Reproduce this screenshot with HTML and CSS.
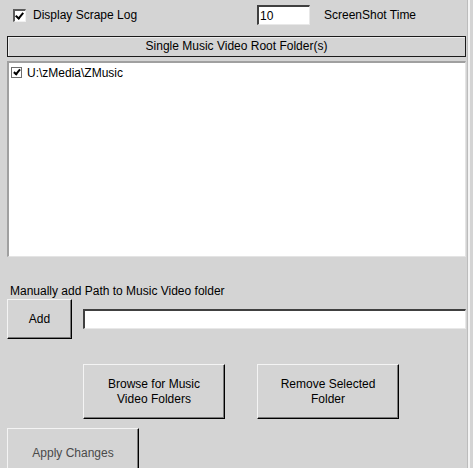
FILE: index.html
```html
<!DOCTYPE html>
<html lang="en">
<head>
    <meta charset="UTF-8">
    <title>Music Video Settings</title>
    <link rel="stylesheet" href="styles.css">
</head>
<body>
    <div class="window">
        <div class="top-row">
            <span class="check checked"></span>
            <span class="top-label">Display Scrape Log</span>
            <input class="field time-field" type="text" value="10">
            <span class="time-label">ScreenShot Time</span>
        </div>

        <div class="list-header">Single Music Video Root Folder(s)</div>
        <div class="folder-list">
            <div class="folder-item">
                <span class="check small checked"></span>
                <span>U:\zMedia\ZMusic</span>
            </div>
        </div>

        <div class="path-label">Manually add Path to Music Video folder</div>
        <div class="add-row">
            <button class="btn add-btn">Add</button>
            <input class="field path-field" type="text">
        </div>

        <div class="action-row">
            <button class="btn big-btn">Browse for Music<br>Video Folders</button>
            <button class="btn big-btn">Remove Selected<br>Folder</button>
        </div>

        <button class="btn apply-btn" disabled>Apply Changes</button>
    </div>
</body>
</html>
```

FILE: styles.css
```css
* {
    margin: 0;
    padding: 0;
    box-sizing: border-box;
}

body {
    font-family: 'Liberation Sans', Arial, sans-serif;
    font-size: 12px;
    color: #000;
    background: #d4d4d4;
    width: 473px;
    height: 468px;
    overflow: hidden;
}

.window {
    width: 468px;
    height: 468px;
    border-right: 1px solid #bcbcbc;
    box-shadow: 2px 0 0 #f4f4f4;
    display: flex;
    flex-direction: column;
    overflow: hidden;
}

.window > * {
    flex-shrink: 0;
}

.top-row {
    display: flex;
    align-items: center;
    height: 20px;
    margin-top: 5px;
    padding-left: 13px;
}

.check {
    width: 13px;
    height: 13px;
    background: #fff;
    border-top: 2px solid #5a5a5a;
    border-left: 2px solid #5a5a5a;
    border-right: 1px solid #f0f0f0;
    border-bottom: 1px solid #f0f0f0;
    position: relative;
    flex-shrink: 0;
}

.check.checked::after {
    content: "";
    position: absolute;
    left: 2px;
    top: 0px;
    width: 3px;
    height: 6px;
    border-right: 2px solid #000;
    border-bottom: 2px solid #000;
    transform: rotate(40deg);
}

.check.small {
    width: 11px;
    height: 11px;
    border-width: 1px;
    border-color: #6e6e6e;
}

.check.small::after {
    left: 3px;
    top: 0px;
    width: 2px;
    height: 5px;
}

.top-label {
    margin-left: 7px;
    width: 224px;
}

.field {
    background: #fff;
    border-top: 2px solid #404040;
    border-left: 2px solid #404040;
    border-right: 1px solid #e8e8e8;
    border-bottom: 1px solid #e8e8e8;
    font-family: inherit;
    font-size: 12px;
    padding: 0 1px;
    outline: none;
}

.time-field {
    width: 53px;
    height: 20px;
}

.time-label {
    margin-left: 14px;
}

.list-header {
    margin: 11px 0 0 7px;
    width: 459px;
    height: 21px;
    border: 1px solid #1a1a1a;
    box-shadow: inset 1px 1px 0 #ececec;
    text-align: center;
    line-height: 19px;
}

.folder-list {
    margin: 4px 0 0 7px;
    width: 459px;
    height: 196px;
    background: #fff;
    border-top: 2px solid #a0a0a0;
    border-left: 2px solid #a0a0a0;
    border-right: 1px solid #e4e4e4;
    border-bottom: 1px solid #e4e4e4;
    padding: 3px 2px;
}

.folder-item {
    display: flex;
    align-items: center;
    gap: 5px;
    height: 13px;
}

.path-label {
    margin: 26px 0 0 10px;
    height: 16px;
    line-height: 16px;
}

.add-row {
    display: flex;
    align-items: center;
    gap: 11px;
    margin-left: 7px;
}

.btn {
    font-family: inherit;
    font-size: 12px;
    color: #000;
    background: #d4d4d4;
    border-top: 1px solid #f4f4f4;
    border-left: 1px solid #f4f4f4;
    border-right: 1px solid #000;
    border-bottom: 1px solid #000;
    box-shadow: inset -1px -1px 0 #7a7a7a;
    line-height: 15px;
}

.add-btn {
    width: 65px;
    height: 40px;
}

.path-field {
    width: 383px;
    height: 20px;
}

.action-row {
    display: flex;
    gap: 32px;
    margin: 25px 0 0 83px;
}

.big-btn {
    width: 142px;
    height: 55px;
}

.apply-btn {
    margin: 9px 0 0 7px;
    width: 132px;
    height: 50px;
    color: #4a4a4a;
}
```
